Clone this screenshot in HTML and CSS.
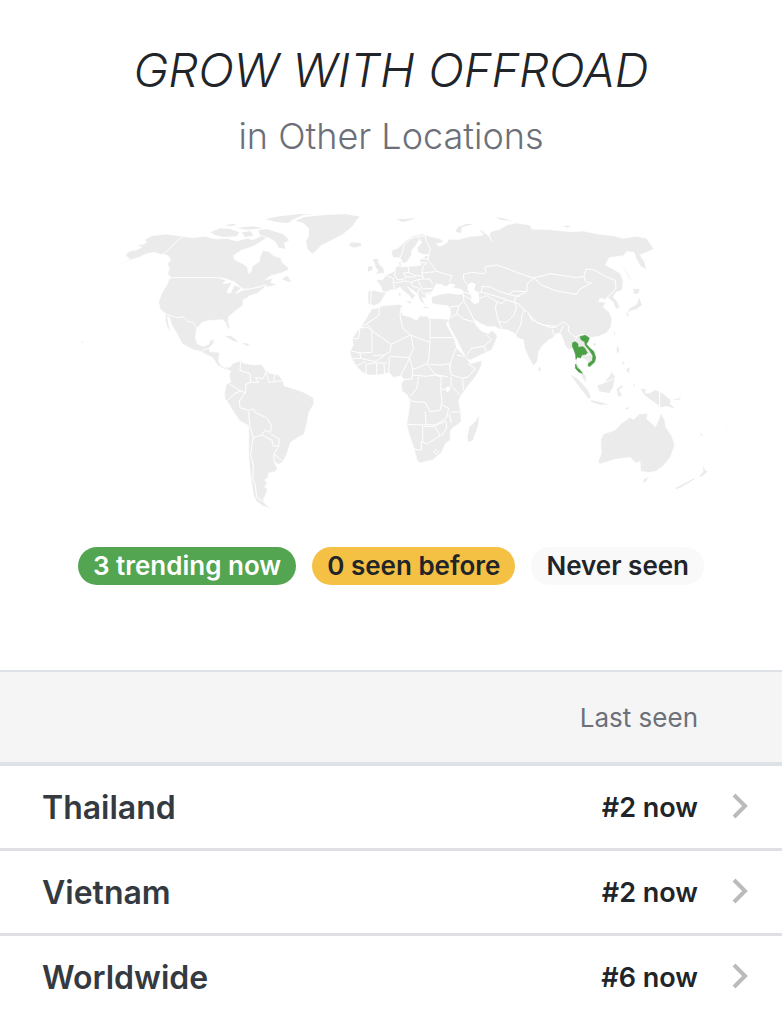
FILE: index.html
```html
<!DOCTYPE html>
<html lang="en">
<head>
    <title>Grow With Offroad</title>
    <meta charset="UTF-8">
    <meta name="viewport" content="width=device-width, initial-scale=1.0">
    <link rel="stylesheet" href="styles.css">
</head>
<body>
    <header class="page-header">
        <h1>GROW WITH OFFROAD</h1>
        <p class="subtitle">in Other Locations</p>
    </header>

    <div class="map">
        <svg viewBox="40 205 702 310" role="img" aria-label="World map of trending locations">
            <!-- North America -->
            <g transform="translate(80 205) scale(.33333)">
                <path class="land" d="M138 148L150 138 172 134 186 126 168 120 190 118 200 112 194 104 215 92 258 87 308 94 250 148 240 148 222 142 200 146 180 156 150 166 108 184 150 162 138 154Z"/>
                <path class="land" d="M308 94L340 98 372 94 410 102 440 100 470 108 500 100 520 104 545 92 560 98 540 112 520 124 484 136 460 152 464 164 492 178 502 186 506 206 514 198 518 182 538 170 542 150 550 136 568 140 580 152 602 158 606 172 626 188 624 196 604 204 572 212 556 224 580 220 572 232 590 240 564 246 552 240 540 244 510 252 488 252 464 232 440 222 415 218 274 218 262 206 268 190 262 176 272 166 264 152 250 148Z"/>
                <path class="land" d="M274 218H415L438 226 428 236 456 232 440 262 452 264 462 240 484 248 466 266 488 256 512 252 540 246 556 238 552 250 530 266 510 272 500 280 490 284 488 302 474 312 456 326 446 336 444 350 450 366 446 376 436 352 428 344 404 346 388 346 368 352 350 370 338 350 326 352 312 336 290 338 256 326 240 312 236 290 244 266 262 238 266 224Z"/>
                <path class="land" d="M256 326L290 338 312 336 326 352 338 350 350 370 346 398 352 416 370 424 386 418 390 406 404 402 400 416 386 430 372 434 364 440 340 434 308 418 298 400 290 384 276 362 268 336 262 334 266 356 272 384 262 368 256 346Z"/>
                <path class="land" d="M364 440L374 434 386 430 390 440 418 442 416 468 422 480 434 488 452 484 456 492 436 494 412 480 398 458 376 448Z"/>
                <path class="isle" d="M436 394L452 392 476 410 460 408ZM486 414L498 414 510 420 500 422ZM606 222L622 212 634 232 618 228ZM4 408L10 410 7 415ZM392 82L420 70 450 72 478 82 470 94 430 96 404 90ZM535 76L560 72 590 82 610 88 628 106 612 114 616 132 596 128 588 112 568 98 540 90ZM556 42L600 34 660 27 718 28 690 38 650 44 620 54 584 50ZM470 68L520 64 550 70 500 74ZM486 82L512 78 520 92 494 96ZM436 60L462 56 470 60 448 64Z"/>
            </g>
            <path class="land" d="M292 221L304 216 325 214 345 213 362 216 357 221 353 227 347 232 342 236 332 241 322 246 316 252 312 255 307 250 305 241 308 235 308 229 303 224Z"/>

            <!-- South America -->
            <g transform="translate(200 345) scale(.33333)">
                <path class="land" d="M76 72L90 66 100 54 122 48 130 54 160 60 184 58 192 68 206 84 236 90 248 106 252 122 282 132 312 142 340 158 342 176 326 204 322 230 312 268 290 280 272 292 262 324 248 352 236 358 222 350 232 370 226 380 206 384 204 398 194 404 202 414 194 424 202 434 198 448 190 462 198 480 216 492 190 484 170 470 160 450 156 420 150 380 146 330 146 242 120 228 104 206 86 176 74 160 74 142 78 118 92 112 88 92 92 78Z"/>
                <path class="border" d="M122 50L120 76 150 86 152 112 138 118 136 146M90 118L122 138 104 146 82 166M122 138L138 144M134 146L118 168 120 188 146 196 160 192 168 204 200 218 214 240 212 262 194 256 186 270 160 278 150 246 146 200M152 112L176 112 166 98 190 100 196 84M194 70L202 92 206 112 226 110 248 106M224 90L222 108M186 270L216 286 220 304 236 302 238 282 214 268M236 302L222 328 248 348M222 328V350M160 278L156 300 152 330 160 360 158 400 166 420 170 456 196 474"/>
            </g>

            <!-- Europe and Asia -->
            <g transform="translate(330 205) scale(.33333)">
                <path class="land" d="M114 258L130 256 158 262 152 244 138 224 158 224 168 210 190 200 196 186 208 182 206 170 214 168 212 186 236 184 262 182 274 180 268 166 286 152 300 150 272 146 262 138 262 128 276 112 268 104 256 124 246 134 244 150 232 170 220 176 210 158 192 158 184 148 186 136 206 128 226 108 250 92 276 86 300 94 332 102 342 112 318 116 330 124 352 112 356 102 384 104 420 94 450 92 462 88 446 76 456 76 480 96 486 110 478 90 482 80 510 72 530 60 560 54 600 60 606 72 660 74 720 80 760 78 800 86 850 92 880 100 920 94 950 100 972 132 950 142 930 150 944 170 950 196 930 182 918 160 912 142 890 140 880 152 838 158 826 180 850 192 872 206 880 230 876 256 858 262 850 276 862 290 870 306 858 314 850 292 838 282 832 276 826 284 810 280 806 290 828 292 820 306 838 322 846 340 844 364 830 384 806 394 780 398 770 392 778 410 768 420 784 436 798 460 790 474 778 480 770 466 758 460 750 450 740 458 742 476 756 498 768 514 770 535 758 520 748 500 738 480 734 450 728 430 716 434 704 420 698 400 690 384 676 388 668 400 656 404 636 424 626 440 622 470 610 482 598 462 584 430 580 404 572 402 560 396 552 384 530 374 506 372 494 364 476 366 452 356 430 342 438 360 454 378 476 386 486 376 496 384 502 396 492 420 484 436 452 450 420 466 410 462 396 436 380 404 360 368 354 350 362 330 360 310 352 302 330 300 306 296 304 276 330 268 356 264 384 268 400 266 396 254 368 248 376 240 360 236 348 246 332 238 318 238 308 256 304 266 286 270 290 280 276 278 286 300 272 290 262 266 240 250 232 244 244 260 256 272 246 284 236 270 218 256 210 246 196 254 180 256 166 266 160 278 150 294 132 302 114 296Z"/>
                <path class="sea" d="M412 240L424 232 438 238 432 254 446 262 448 292 436 298 424 290 424 272 414 258Z"/>
                <path class="border" d="M210 158L218 140 222 120 240 102 262 94 270 104M262 94L286 92 288 108 302 132 296 146M296 150L294 166 308 182 318 198 340 206 366 212 358 230M268 160L294 162M268 172L290 174 280 182 276 204 316 200M276 204L280 222 300 222 308 238M234 184L238 204 258 212 276 214M196 188L194 210 202 224 220 224 228 216 220 204 238 202M170 212L190 220 190 236 194 252M190 232L206 232 224 228 244 232 262 224 280 222M228 216H256M244 232L248 244 268 250 262 268M262 224L270 240 278 252 306 250M268 250L280 266 304 262M150 259L176 262M124 258L122 298"/>
                <path class="border" d="M412 240L402 226 400 208 424 202 460 206 468 200 464 186 500 180 530 190 560 202 600 216 612 218 640 212 660 206 700 212 740 218 762 214 768 192 790 194 830 216 856 226 858 250 846 264 828 282M446 262L454 262 456 244 480 246 510 260 536 268 552 258 590 260 592 236 612 218 634 240 680 258 740 268 750 252 784 234 766 230 762 214M446 280L470 272 500 290 516 296 528 284 552 292 556 276 586 262M454 262L480 268 530 284M536 268L550 272 572 274M552 292L566 296 582 314 596 324 604 344 640 360 680 364 700 350 716 362 716 380 736 396 754 388 772 392M598 330L620 352 662 368 680 366M582 314L576 332 572 360 562 380 556 394M500 292L496 310 506 350 530 352 552 330 560 306 556 294M506 350L516 372M400 268L402 290 416 310 430 342M362 340L380 326 400 342 430 350M380 326L386 302 400 290M360 306L386 302M384 256L404 262 424 268M396 268L410 276 424 284M412 448L424 430 462 424 470 440M462 424L484 404 470 390M672 390L666 372M690 384L700 362M740 396L734 412M754 388L764 402 774 430 786 448M762 450L786 448"/>
                <path class="isle" d="M128 162L144 162 146 176 160 190 162 204 136 206 146 198 138 188 134 176ZM114 186L126 182 128 194 114 200ZM56 120L66 112 92 114 94 122 72 128ZM200 42L230 42 258 38 240 46 218 52ZM376 80L384 66 410 56 430 58 396 66 392 84ZM498 36L520 40 548 48 510 44ZM698 62L724 62 712 68ZM206 264L212 264 210 278ZM228 288L244 290 240 296ZM280 306H296V309H280ZM627 484L633 492 630 500 625 496ZM910 252L928 252 926 264 912 268ZM926 276L936 300 920 312 900 318 890 326 900 310 918 300 924 290ZM888 324L896 328 892 336ZM878 184L892 204 904 226 898 220Z"/>
            </g>

            <!-- Africa -->
            <g transform="translate(340 295) scale(.33333)">
                <path class="land" d="M95 42L110 40 130 32 180 28 188 34 182 46 188 60 210 66 230 76 240 62 260 64 270 70 318 72 328 74 322 84 318 84 330 108 344 134 350 160 372 180 384 196 392 206 426 196 424 212 410 240 380 278 366 298 356 316 362 350 364 380 332 404 330 436 316 446 306 470 280 494 240 504 232 498 222 460 208 420 200 390 206 352 210 320 202 300 186 288 184 266 192 252 182 242 160 248 148 234 128 238 110 240 84 240 66 232 50 214 34 190 30 170 40 150 36 132 50 110 68 88 80 68Z"/>
                <path class="border" d="M118 38L116 62 80 86 60 98M36 132L56 130 60 98 80 98M80 86L96 104V172L60 174 34 168M80 96L154 148 150 170 134 180 100 182M154 148L212 120M184 36L180 60 188 100 212 120 268 142M270 70V128H340M270 128V146L266 190 262 206M214 122L220 160 208 188 150 184M208 188L214 206 218 224 262 206 284 238 324 246M270 208L300 210 328 206 334 216M348 160L340 180 328 214 334 240 368 250 384 246 406 222 384 206M350 180L372 184M368 250L370 286M332 246L334 272 360 300M208 190L190 226 182 242M218 224L216 252 190 254M216 240L260 244 284 240M236 246L230 280 212 304M284 240L304 246 302 280 306 320 300 346 270 350 256 322 222 320 208 312M256 350L258 388 286 390 320 368 326 340 306 330M200 388L256 390M248 394V440M244 466V440L262 446 300 422 284 394 250 394M286 392L318 378 320 400 304 424M332 352L362 350M328 356L334 384M222 462L244 466M60 174L62 190 34 192M62 190L104 200 134 182M78 208V240M110 206V240M132 206L134 238M148 186L146 234M78 208L104 204 140 204M50 212L76 200M304 282L316 284M280 470L288 463 296 470 288 478Z"/>
                <path class="sea" d="M316 278L328 274 332 284 320 292Z"/>
                <path class="isle" d="M418 362L414 392 398 436 386 442 382 428 388 396 406 380Z"/>
            </g>

            <!-- South East Asia and Oceania -->
            <g transform="translate(550 310) scale(.33333)">
                <path class="land" d="M152 390L160 372 196 360 214 340 240 322 250 328 268 312 294 310 290 326 316 350 326 330 332 308 344 330 348 352 366 380 374 404 362 440 340 468 318 484 296 488 272 484 270 454 258 460 240 442 196 448 150 462 144 456 154 430Z"/>
                <path class="isle" d="M278 518L282 508 296 502 286 516ZM460 466L466 482 474 484 454 500 448 498 460 486ZM430 506L436 506 394 532 378 538 376 534ZM272 236L288 238 284 250 300 250 316 240 340 252 362 270 360 282 376 296 350 288 334 292 312 276 284 256ZM364 270L384 266 396 260 386 270ZM142 226L160 220 178 200 184 186 194 198 190 230 178 250 148 244ZM200 238L214 226 218 230 206 240 216 256 206 262ZM62 194L80 204 112 238 122 262 116 266 92 236ZM122 270L150 276 176 284 150 284 124 276ZM200 108L208 116 206 130 200 126ZM228 180L240 170 236 190ZM216 152L224 160 218 164ZM192 64L196 68 194 80ZM130 100H138L135 108H131ZM224 296L240 290 234 298ZM250 222L256 226 252 232ZM448 366L460 376 456 378ZM530 350L534 350 532 354Z"/>
                <path class="border" d="M329 242V292M150 222L178 212 190 206"/>
                <path class="trending" d="M68 98L76 95 84 102 84 112 98 110 104 114 112 128 108 133 95 135 92 144 82 141 78 148 77 134 72 120 67 108ZM77 162L82 174 90 180 97 190 86 186 76 174Z"/>
                <path class="trending" d="M90 80L106 76 118 84 114 94 109 102 118 113 131 124 137 142 134 156 120 169 114 168 116 160 127 152 129 138 119 122 106 106 104 95 94 90Z"/>
            </g>
        </svg>
    </div>

    <div class="legend">
        <span class="pill pill-trending">3 trending now</span>
        <span class="pill pill-seen">0 seen before</span>
        <span class="pill pill-never">Never seen</span>
    </div>

    <table class="locations">
        <thead>
            <tr>
                <th aria-label="Location"></th>
                <th>Last seen</th>
                <th aria-label="Details"></th>
            </tr>
        </thead>
        <tbody>
            <tr>
                <td class="place">Thailand</td>
                <td class="rank">#2 now</td>
                <td class="more"><a href="#thailand" aria-label="Thailand"><svg class="chevron" viewBox="0 0 16 26"><path d="M2 2L13 13 2 24"/></svg></a></td>
            </tr>
            <tr>
                <td class="place">Vietnam</td>
                <td class="rank">#2 now</td>
                <td class="more"><a href="#vietnam" aria-label="Vietnam"><svg class="chevron" viewBox="0 0 16 26"><path d="M2 2L13 13 2 24"/></svg></a></td>
            </tr>
            <tr>
                <td class="place">Worldwide</td>
                <td class="rank">#6 now</td>
                <td class="more"><a href="#worldwide" aria-label="Worldwide"><svg class="chevron" viewBox="0 0 16 26"><path d="M2 2L13 13 2 24"/></svg></a></td>
            </tr>
        </tbody>
    </table>
</body>
</html>
```
FILE: styles.css
```css
* {
    margin: 0;
    padding: 0;
    box-sizing: border-box;
}

body {
    font-family: Inter, 'Liberation Sans', sans-serif;
    background: #fff;
    color: #212529;
}

.page-header {
    padding-top: 40px;
    text-align: center;
}

h1 {
    font-size: 47px;
    font-weight: 300;
    font-style: italic;
    line-height: 60px;
}

.subtitle {
    margin-top: 12px;
    font-size: 36px;
    font-weight: 300;
    line-height: 48px;
    color: #6c7079;
}

.map {
    padding: 0 40px;
    margin-top: 45px;
}

.map svg {
    display: block;
    width: 100%;
}

.land {
    fill: #ebebeb;
    stroke: #fff;
    stroke-width: 2;
    stroke-linejoin: round;
}

.isle {
    fill: #ebebeb;
}

.sea {
    fill: #fff;
}

.border {
    fill: none;
    stroke: #fff;
    stroke-width: 3;
    stroke-linejoin: round;
}

.trending {
    fill: #4ba046;
    stroke: #4ba046;
    stroke-width: 2;
}

.legend {
    display: flex;
    justify-content: center;
    gap: 16px;
    margin-top: 32px;
}

.pill {
    padding: 0 15px;
    border-radius: 19px;
    font-size: 26px;
    font-weight: 600;
    line-height: 38px;
    white-space: nowrap;
}

.pill-trending {
    background: #53a551;
    color: #fff;
}

.pill-seen {
    background: #f4c144;
}

.pill-never {
    background: #f9f9fa;
}

.locations {
    width: 100%;
    margin-top: 85px;
    border-collapse: separate;
    border-spacing: 0;
}

th {
    height: 96px;
    padding: 0;
    background: #f5f5f5;
    border-top: 2px solid #dee2e6;
    border-bottom: 4px solid #dee2e6;
    color: #6c7079;
    font-size: 26px;
    font-weight: 400;
    text-align: right;
}

td {
    height: 85px;
    border-bottom: 3px solid #dfe0e6;
}

tr:last-child td {
    border-bottom-color: transparent;
}

.place {
    padding-left: 42px;
    color: #343a40;
    font-size: 32px;
    font-weight: 600;
}

.rank {
    font-size: 27px;
    font-weight: 600;
    text-align: right;
}

.more {
    width: 84px;
    padding-right: 34px;
    padding-bottom: 3px;
    text-align: right;
}

.more a {
    display: inline-block;
    vertical-align: middle;
}

.chevron {
    display: block;
    width: 16px;
    height: 26px;
    fill: none;
    stroke: #bbb;
    stroke-width: 4;
}
```
